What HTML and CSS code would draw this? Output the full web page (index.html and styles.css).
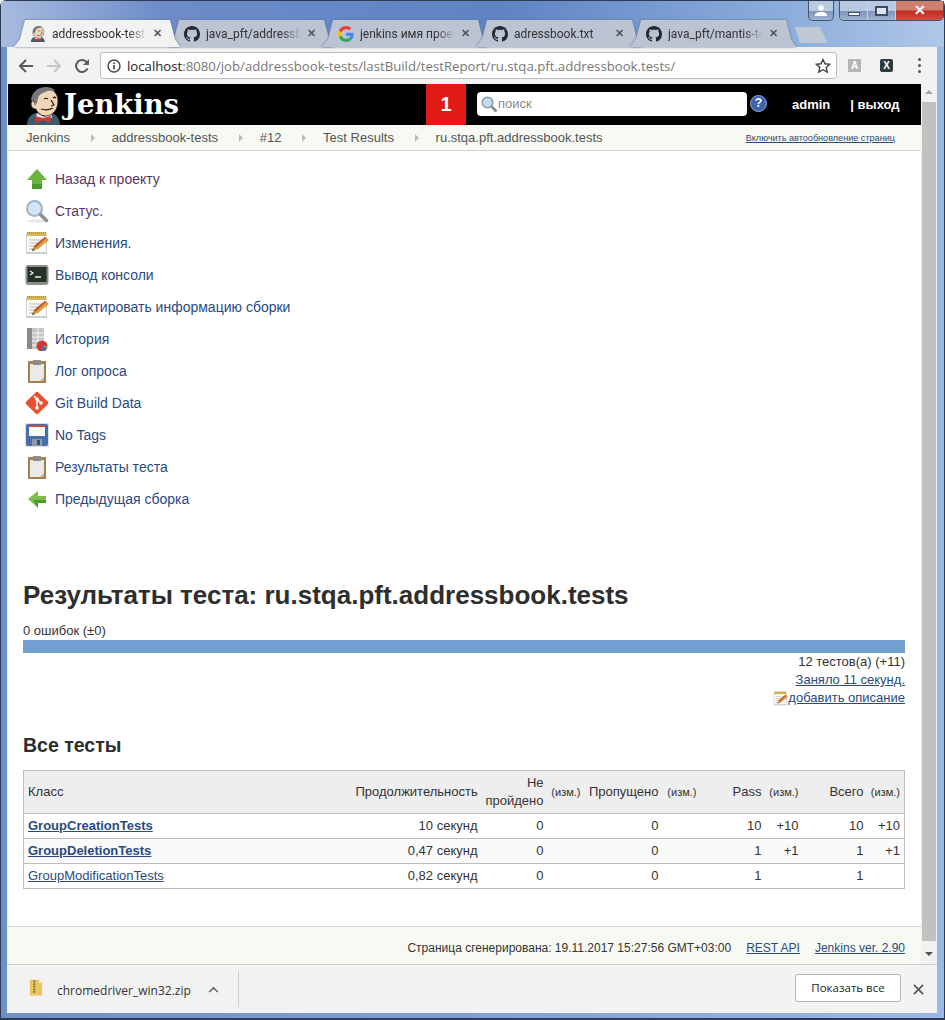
FILE: index.html
```html
<!DOCTYPE html>
<html>

<head>
  <title>addressbook-tests</title>
  <link rel="stylesheet" href="styles.css">
</head>

<body>
  <svg class="defs" width="0" height="0">
    <symbol id="gh" viewBox="0 0 16 16">
      <path fill="#24292e" d="M8 0C3.58 0 0 3.58 0 8c0 3.54 2.29 6.53 5.47 7.59.4.07.55-.17.55-.38 0-.19-.01-.82-.01-1.49-2.01.37-2.53-.49-2.69-.94-.09-.23-.48-.94-.82-1.13-.28-.15-.68-.52-.01-.53.63-.01 1.08.58 1.23.82.72 1.21 1.87.87 2.33.66.07-.52.28-.87.51-1.07-1.78-.2-3.64-.89-3.64-3.95 0-.87.31-1.59.82-2.15-.08-.2-.36-1.02.08-2.12 0 0 .67-.21 2.2.82.64-.18 1.32-.27 2-.27.68 0 1.36.09 2 .27 1.53-1.04 2.2-.82 2.2-.82.44 1.1.16 1.92.08 2.12.51.56.82 1.27.82 2.15 0 3.07-1.87 3.75-3.65 3.95.29.25.54.73.54 1.48 0 1.07-.01 1.93-.01 2.2 0 .21.15.46.55.38A8.013 8.013 0 0016 8c0-4.42-3.58-8-8-8z"/>
    </symbol>
    <symbol id="jenkins" viewBox="0 0 36 38">
      <path fill="#3f5a6c" d="M1 38c0-6 3-10 8-12l9 2 8-2c5 2 8 6 8 12z"/>
      <path fill="#f3f3f0" d="M11 26l7 4 7-4 1 5H10z"/>
      <path fill="#d33833" d="M9 29l8 2 8-2-1 7-7-3-7 3z"/>
      <path fill="#f0d6b7" stroke="#231f20" stroke-width="0.800" d="M8 14C8 6 14 2 21 2c7 0 11 5 11 12 0 8-5 15-12 15-6 0-9-4-10-7-3 0-5-2-5-5s3-5 5-3z"/>
      <path fill="#77767a" d="M5 13C6 5 12 0 20 0c4 0 7 1 9 4-6-1-13 1-16 5-1 2-2 5-2 8l-3-2c-1-1-2-1-3-2z"/>
      <path fill="none" stroke="#231f20" stroke-width="1.200" d="M18 12c1-1 3-1 4 0M27 11c1-1 2-1 3 0M25 13l3 5-3 1M15 22c3 1 8 1 12-1"/>
      <path fill="none" stroke="#231f20" stroke-width="0.800" d="M7 14c1 0 2 2 2 4"/>
    </symbol>
    <symbol id="note" viewBox="0 0 24 24">
      <path fill="#cfcfca" d="M1 3h21v20H1z"/>
      <path fill="#fbfbf8" d="M2 5h19v16H2z"/>
      <path fill="#d8b95a" d="M2 1h19v4H2z"/>
      <path stroke="#8a7a45" stroke-dasharray="1 1" d="M2 2h19"/>
      <path stroke="#b9b9b4" d="M4 9h13M4 12h10M4 15h7M4 18h5"/>
      <path fill="#e39a3c" d="M7 20l2-5L20 6l4 3-11 9z"/>
      <path fill="#b5542c" d="M9 15l11-9 1 1-11 10z"/>
      <path fill="#5d4a2e" d="M7 20l1-3 2 2z"/>
    </symbol>
    <symbol id="clip" viewBox="0 0 24 24">
      <path fill="#a5814f" d="M3 2h18v22H3z"/>
      <path fill="#e9ebe8" d="M5 5h14v17H5z"/>
      <path fill="#b3b4b0" d="M15 22l4-4v4z"/>
      <path fill="#8d8d8b" d="M8 1h8v5H8z"/>
    </symbol>
  </svg>

  <div class="window">
    <div class="tabstrip">
      <div class="tab active">
        <svg class="favicon"><use href="#jenkins"/></svg>
        <span class="tab-title">addressbook-tests</span>
        <span class="tab-x">✕</span>
      </div>
      <div class="tab">
        <svg class="favicon"><use href="#gh"/></svg>
        <span class="tab-title">java_pft/addressbook</span>
        <span class="tab-x">✕</span>
      </div>
      <div class="tab">
        <svg class="favicon" viewBox="0 0 48 48">
          <path fill="#ea4335" d="M24 9.500c3.500 0 6.700 1.200 9.200 3.600l6.900-6.900C35.900 2.400 30.500 0 24 0 14.600 0 6.500 5.400 2.600 13.200l8 6.200C12.500 13.700 17.800 9.500 24 9.500z"/>
          <path fill="#4285f4" d="M47 24.500c0-1.600-.1-3.100-.4-4.500H24v9h12.900c-.6 3-2.200 5.500-4.700 7.200l7.700 6C44.400 38.100 47 31.900 47 24.500z"/>
          <path fill="#fbbc05" d="M10.500 28.600C10 27.200 9.800 25.600 9.800 24s.3-3.200.8-4.600l-8-6.200C.9 16.500 0 20.100 0 24s.9 7.500 2.600 10.800z"/>
          <path fill="#34a853" d="M24 48c6.500 0 11.900-2.100 15.900-5.800l-7.700-6c-2.100 1.400-4.900 2.300-8.200 2.300-6.200 0-11.500-4.200-13.400-9.900l-8 6.200C6.500 42.600 14.600 48 24 48z"/>
        </svg>
        <span class="tab-title">jenkins имя проекта</span>
        <span class="tab-x">✕</span>
      </div>
      <div class="tab">
        <svg class="favicon"><use href="#gh"/></svg>
        <span class="tab-title no-fade">adressbook.txt</span>
        <span class="tab-x">✕</span>
      </div>
      <div class="tab">
        <svg class="favicon"><use href="#gh"/></svg>
        <span class="tab-title">java_pft/mantis-tests</span>
        <span class="tab-x">✕</span>
      </div>
      <div class="new-tab"></div>

      <div class="user-btn">
        <svg width="12" height="11" viewBox="0 0 12 11"><circle cx="6" cy="3" r="2.800" fill="#fff"/><path fill="#fff" d="M0 11c0-3 2-4 6-4s6 1 6 4z"/></svg>
      </div>
      <div class="win-btns">
        <div class="win-min"><span></span></div>
        <div class="win-max"><span></span></div>
        <div class="win-close">✕</div>
      </div>
    </div>

    <div class="chrome">
      <div class="toolbar">
        <svg class="nav" viewBox="0 0 16 16"><path fill="none" stroke="#5a5a5a" stroke-width="2" d="M15 8H2M8 2L2 8l6 6"/></svg>
        <svg class="nav" viewBox="0 0 16 16"><path fill="none" stroke="#c6c6c6" stroke-width="2" d="M1 8h13M8 2l6 6-6 6"/></svg>
        <svg class="nav" viewBox="0 0 16 16"><path fill="none" stroke="#5a5a5a" stroke-width="2" d="M13.500 10.500A6 6 0 1 1 13 4.500"/><path fill="#5a5a5a" d="M15 1v6H9z"/></svg>
        <div class="omnibox">
          <svg class="omni-info" viewBox="0 0 14 14"><circle cx="7" cy="7" r="6" fill="none" stroke="#444" stroke-width="1.400"/><path fill="#444" d="M6.200 6h1.600v4.500H6.200zM6.200 3.400h1.600V5H6.200z"/></svg>
          <span class="url"><b>localhost</b>:8080/job/addressbook-tests/lastBuild/testReport/ru.stqa.pft.addressbook.tests/</span>
          <svg class="omni-star" viewBox="0 0 16 16"><path fill="none" stroke="#444" stroke-width="1.400" d="M8 1.500l2 4.300 4.700.5-3.500 3.200 1 4.600L8 11.700l-4.200 2.400 1-4.600L1.300 6.300 6 5.800z"/></svg>
        </div>
        <div class="ext ext-a">A</div>
        <div class="ext ext-x">X</div>
        <div class="dots"><span></span><span></span><span></span></div>
      </div>

      <div class="viewport">
        <div class="page">
          <header class="jk-head">
            <svg class="jk-face"><use href="#jenkins"/></svg>
            <span class="jk-name">Jenkins</span>
            <div class="jk-badge">1</div>
            <div class="jk-search">
              <svg class="jk-lens" viewBox="0 0 24 24"><circle cx="10" cy="10" r="7" fill="#c5daef" stroke="#8a9aaa" stroke-width="2"/><path stroke="#8a8a8a" stroke-width="3.500" d="M15 15l7 7"/></svg>
              <span>поиск</span>
            </div>
            <div class="jk-help">?</div>
            <a class="jk-user">admin</a>
            <a class="jk-user jk-logout">| выход</a>
          </header>

          <nav class="crumbs">
            <span class="crumb">Jenkins</span>
            <span class="crumb">addressbook-tests</span>
            <span class="crumb">#12</span>
            <span class="crumb">Test Results</span>
            <span class="crumb last">ru.stqa.pft.addressbook.tests</span>
            <a class="autorefresh">Включить автообновление страниц</a>
          </nav>

          <div class="content">
            <ul class="side">
              <li>
                <svg class="ico" viewBox="0 0 24 24"><path fill="#6db33f" d="M12 2l10 11h-5v9H7v-9H2z"/><path fill="#4c9a2a" d="M7 17h10v5H7z"/></svg>
                <a class="visited">Назад к проекту</a>
              </li>
              <li>
                <svg class="ico" viewBox="0 0 24 24"><ellipse cx="12" cy="22" rx="10" ry="1.500" fill="#e4e4e4"/><circle cx="9.500" cy="9.500" r="7.500" fill="#d3e4f3" stroke="#9eb4c6" stroke-width="2"/><path stroke="#8f9296" stroke-width="3.500" stroke-linecap="round" d="M15.500 15.500l6 6"/></svg>
                <a class="visited">Статус.</a>
              </li>
              <li>
                <svg class="ico"><use href="#note"/></svg>
                <a>Изменения.</a>
              </li>
              <li>
                <svg class="ico" viewBox="0 0 24 24"><rect x="0.500" y="2" width="23" height="20" rx="3" fill="#8b8d89"/><rect x="2.500" y="4" width="19" height="15" fill="#263226"/><path fill="none" stroke="#eef" stroke-width="1.300" d="M5 8l3 2-3 2M10 14h6"/></svg>
                <a>Вывод консоли</a>
              </li>
              <li>
                <svg class="ico"><use href="#note"/></svg>
                <a>Редактировать информацию сборки</a>
              </li>
              <li>
                <svg class="ico" viewBox="0 0 24 24"><rect x="2" y="1" width="17" height="21" fill="#c4c6c4"/><path stroke="#f4f4f4" d="M2 6h17M2 10h17M2 14h17M2 18h17M13 1v21"/><rect x="2" y="1" width="5" height="21" fill="#8a8a88"/><circle cx="17" cy="19" r="5.500" fill="#cc3a32"/><path fill="#4b6ea8" d="M17 19l5 2a5.500 5.500 0 0 1-5 3.500z"/><path fill="#8ab04a" d="M17 19l5 2c.3-.6.5-1.300.5-2z"/></svg>
                <a>История</a>
              </li>
              <li>
                <svg class="ico"><use href="#clip"/></svg>
                <a>Лог опроса</a>
              </li>
              <li>
                <svg class="ico" viewBox="0 0 24 24"><rect x="3.500" y="3.500" width="17" height="17" rx="2" transform="rotate(45 12 12)" fill="#e8502f"/><path fill="none" stroke="#fff" stroke-width="1.500" d="M9 5l7 7M12 8v9"/><circle cx="12" cy="8" r="1.800" fill="#fff"/><circle cx="12" cy="17" r="1.800" fill="#fff"/><circle cx="16" cy="12" r="1.800" fill="#fff"/></svg>
                <a>Git Build Data</a>
              </li>
              <li>
                <svg class="ico" viewBox="0 0 24 24"><rect width="24" height="24" fill="#d9dde6"/><rect x="1" y="1" width="22" height="22" rx="2" fill="#4a6ca8"/><rect x="4" y="2" width="16" height="11" fill="#fafafa"/><rect x="4" y="2" width="16" height="2" fill="#d5463a"/><rect x="7" y="16" width="10" height="7" fill="#8d99ad"/><rect x="12" y="17" width="3" height="5" fill="#3d4c68"/></svg>
                <a>No Tags</a>
              </li>
              <li>
                <svg class="ico"><use href="#clip"/></svg>
                <a>Результаты теста</a>
              </li>
              <li>
                <svg class="ico" viewBox="0 0 24 24"><path fill="#7dbb4b" d="M3 12l10-8v5h8v7h-8v5z"/><path fill="#4c9a2a" d="M13 16h8v-3H8l5 8z"/></svg>
                <a>Предыдущая сборка</a>
              </li>
            </ul>

            <main class="report">
              <h1>Результаты теста: ru.stqa.pft.addressbook.tests</h1>
              <div class="errors">0 ошибок (±0)</div>
              <div class="bar"></div>
              <div class="summary">
                <div>12 тестов(а) (+11)</div>
                <div><a>Заняло 11 секунд.</a></div>
                <div class="add-desc">
                  <svg class="ico-small"><use href="#note"/></svg><a>добавить описание</a>
                </div>
              </div>

              <h2>Все тесты</h2>
              <table class="results">
                <colgroup>
                  <col>
                  <col class="c-dur">
                  <col class="c-fail">
                  <col class="c-diff">
                  <col class="c-skip">
                  <col class="c-diff2">
                  <col class="c-pass">
                  <col class="c-diff">
                  <col class="c-pass">
                  <col class="c-diff">
                </colgroup>
                <thead>
                  <tr>
                    <th class="left">Класс</th>
                    <th>Продолжительность</th>
                    <th>Не пройдено</th>
                    <th class="small">(изм.)</th>
                    <th>Пропущено</th>
                    <th class="small">(изм.)</th>
                    <th>Pass</th>
                    <th class="small">(изм.)</th>
                    <th>Всего</th>
                    <th class="small">(изм.)</th>
                  </tr>
                </thead>
                <tbody>
                  <tr>
                    <td class="left"><a class="strong">GroupCreationTests</a></td>
                    <td>10 секунд</td>
                    <td>0</td>
                    <td></td>
                    <td>0</td>
                    <td></td>
                    <td>10</td>
                    <td>+10</td>
                    <td>10</td>
                    <td>+10</td>
                  </tr>
                  <tr class="alt">
                    <td class="left"><a class="strong">GroupDeletionTests</a></td>
                    <td>0,47 секунд</td>
                    <td>0</td>
                    <td></td>
                    <td>0</td>
                    <td></td>
                    <td>1</td>
                    <td>+1</td>
                    <td>1</td>
                    <td>+1</td>
                  </tr>
                  <tr>
                    <td class="left"><a>GroupModificationTests</a></td>
                    <td>0,82 секунд</td>
                    <td>0</td>
                    <td></td>
                    <td>0</td>
                    <td></td>
                    <td>1</td>
                    <td></td>
                    <td>1</td>
                    <td></td>
                  </tr>
                </tbody>
              </table>
            </main>
          </div>

          <footer class="foot">
            <span>Страница сгенерирована: 19.11.2017 15:27:56 GMT+03:00</span>
            <a>REST API</a>
            <a>Jenkins ver. 2.90</a>
          </footer>
        </div>

        <div class="scrollbar">
          <div class="sb-up"></div>
          <div class="sb-thumb"></div>
          <div class="sb-down"></div>
        </div>
      </div>

      <div class="downloads">
        <svg class="zip" viewBox="0 0 16 18"><path fill="#e9c65f" d="M1 0h10l4 4v14H1z"/><path fill="#f6e7a8" d="M11 0l4 4h-4z"/><path stroke="#7a6a3a" stroke-width="2" stroke-dasharray="2 1" d="M6 1v14"/></svg>
        <span class="dl-name">chromedriver_win32.zip</span>
        <svg class="caret" viewBox="0 0 12 8"><path fill="none" stroke="#555" stroke-width="1.600" d="M1 7l5-5 5 5"/></svg>
        <div class="dl-sep"></div>
        <div class="dl-all">Показать все</div>
        <svg class="dl-x" viewBox="0 0 12 12"><path stroke="#555" stroke-width="1.800" d="M1 1l10 10M11 1L1 11"/></svg>
      </div>
    </div>
  </div>
</body>

</html>
```

FILE: styles.css
```css
html,
body {
  margin: 0;
  padding: 0;
}

body {
  font-family: "Liberation Sans", sans-serif;
  font-size: 13px;
  color: #333;
  overflow: hidden;
}

.defs {
  display: block;
  height: 0;
}

a {
  color: #2a4a7f;
  text-decoration: underline;
}

.window {
  width: 945px;
  height: 1020px;
  box-sizing: border-box;
  display: flex;
  flex-direction: column;
  padding-bottom: 5px;
  border: 1px solid #2c3a52;
  border-bottom-width: 2px;
  border-radius: 6px 6px 0 0;
  background: linear-gradient(90deg, #6f8fc9, #7e9fd8 50%, #9db8e6);
}

/* tabs */
.tabstrip {
  height: 46px;
  display: flex;
  align-items: flex-end;
  padding: 0 3px 0 13px;
  flex: none;
  background: linear-gradient(90deg, #a7bbdf 0, #6d8cc8 160px, #5f83c4 500px, #8fb0dc 800px, #b0c8e8 945px);
}

.tab {
  position: relative;
  width: 166px;
  height: 27px;
  margin-right: -12px;
  box-sizing: border-box;
  padding-left: 16px;
  display: flex;
  flex: none;
  align-items: center;
  font-family: Roboto, sans-serif;
  font-size: 12px;
  color: #333;
  isolation: isolate;
  filter: drop-shadow(0 0 1px #5f6f8f);
}

.tab::before {
  content: '';
  position: absolute;
  inset: 0;
  z-index: -1;
  background: #bcc3d3;
  clip-path: polygon(0 100%, 6px 70%, 11px 0, 156px 0, 161px 70%, 100% 100%);
}

.tab.active {
  z-index: 2;
}

.tab.active::before {
  background: #f2f2f2;
}

.favicon {
  width: 16px;
  height: 16px;
  flex: none;
}

.tab-title {
  width: 95px;
  margin-left: 6px;
  overflow: hidden;
  white-space: nowrap;
  -webkit-mask-image: linear-gradient(90deg, #000 80%, transparent);
  mask-image: linear-gradient(90deg, #000 80%, transparent);
}

.tab-title.no-fade {
  -webkit-mask-image: none;
  mask-image: none;
}

.tab-x {
  margin-left: 6px;
  font-size: 11px;
  font-weight: bold;
  color: #555;
}

.new-tab {
  width: 33px;
  height: 16px;
  margin: 0 -20px 4px 11px;
  flex: none;
  background: #bfc9d6;
  clip-path: polygon(0 0, 75% 0, 100% 100%, 15% 100%);
}

.user-btn {
  align-self: flex-start;
  margin-left: auto;
  width: 24px;
  height: 19px;
  flex: none;
  display: flex;
  align-items: center;
  justify-content: center;
  border: 1px solid #44526e;
  border-top: none;
  border-radius: 0 0 5px 5px;
  background: linear-gradient(#b9c9e0 50%, #7f95bb 55%, #9fb3d2);
}

.win-btns {
  align-self: flex-start;
  margin-left: 5px;
  height: 19px;
  flex: none;
  display: flex;
  border: 1px solid #44526e;
  border-top: none;
  border-radius: 0 0 5px 5px;
  overflow: hidden;
}

.win-min,
.win-max {
  width: 27px;
  display: flex;
  align-items: center;
  justify-content: center;
  background: linear-gradient(#b9c9e0 50%, #7f95bb 55%, #9fb3d2);
  border-right: 1px solid #c5d2e6;
}

.win-min span {
  width: 12px;
  height: 4px;
  margin-top: 7px;
  background: #fff;
  border: 1px solid #44526e;
  box-sizing: border-box;
}

.win-max span {
  width: 13px;
  height: 10px;
  border: 2px solid #3d4c68;
  box-sizing: border-box;
  background: #dfe6f0;
}

.win-close {
  width: 47px;
  text-align: center;
  font-size: 14px;
  font-weight: bold;
  line-height: 19px;
  color: #fff;
  background: linear-gradient(#cf7d6e 45%, #bd2f22 55%, #cf4f3f);
}

/* chrome frame */
.chrome {
  flex: 1;
  min-height: 0;
  margin: 0 7px 0 6px;
  display: flex;
  flex-direction: column;
  background: #f2f2f2;
}

.toolbar {
  height: 37px;
  flex: none;
  display: flex;
  align-items: center;
  padding-left: 11px;
}

.nav {
  width: 16px;
  height: 16px;
  margin-right: 12px;
  flex: none;
}

.omnibox {
  width: 737px;
  height: 27px;
  margin-left: -2px;
  box-sizing: border-box;
  border: 1px solid #bdbdbd;
  border-radius: 3px;
  background: #fff;
  display: flex;
  align-items: center;
  padding: 0 5px 0 6px;
  flex: none;
}

.omni-info {
  width: 14px;
  height: 14px;
  flex: none;
}

.url {
  margin-left: 6px;
  font-family: "Open Sans", sans-serif;
  font-size: 13.200px;
  color: #777;
  white-space: nowrap;
}

.url b {
  font-weight: normal;
  color: #222;
}

.omni-star {
  width: 16px;
  height: 16px;
  margin-left: auto;
  flex: none;
}

.ext {
  width: 13px;
  height: 13px;
  font-size: 10px;
  font-weight: bold;
  line-height: 13px;
  text-align: center;
  color: #fff;
  flex: none;
}

.ext-a {
  margin-left: 11px;
  background: #b5b5b5;
}

.ext-x {
  margin-left: 19px;
  background: #2f3a40;
  border-radius: 2px;
}

.dots {
  margin-left: 25px;
  display: flex;
  flex-direction: column;
  gap: 3px;
}

.dots span {
  width: 3px;
  height: 3px;
  border-radius: 50%;
  background: #555;
}

.viewport {
  flex: 1;
  min-height: 0;
  display: flex;
}

.page {
  flex: 1;
  min-width: 0;
  margin-left: 1px;
  display: flex;
  flex-direction: column;
  background: #fff;
}

/* jenkins header */
.jk-head {
  height: 41px;
  flex: none;
  background: #000;
  display: flex;
  align-items: center;
  color: #fff;
}

.jk-face {
  width: 36px;
  height: 38px;
  margin-left: 18px;
  flex: none;
  align-self: flex-end;
}

.jk-name {
  width: 362px;
  margin: -2px 0 0 2px;
  font-family: "DejaVu Serif", serif;
  font-size: 27.400px;
  font-weight: bold;
}

.jk-badge {
  width: 40px;
  align-self: stretch;
  background: #e01b16;
  font-size: 20px;
  font-weight: bold;
  line-height: 41px;
  text-align: center;
}

.jk-search {
  width: 270px;
  height: 24px;
  margin: -2px 0 0 11px;
  padding-left: 3px;
  box-sizing: border-box;
  background: #fff;
  border-radius: 4px;
  display: flex;
  align-items: center;
  color: #888;
  font-size: 13px;
}

.jk-lens {
  width: 18px;
  height: 18px;
  flex: none;
}

.jk-help {
  width: 15px;
  height: 15px;
  margin: -2px 0 0 3px;
  border: 1px solid #8fa9d6;
  border-radius: 50%;
  background: #3a65ae;
  font-size: 12px;
  font-weight: bold;
  line-height: 15px;
  text-align: center;
}

.jk-user {
  margin-left: 25px;
  color: #fff;
  font-weight: bold;
  text-decoration: none;
}

.jk-logout {
  margin-left: 20px;
}

/* breadcrumbs */
.crumbs {
  height: 26px;
  flex: none;
  box-sizing: border-box;
  padding-left: 18px;
  display: flex;
  align-items: center;
  background: #f6faf2;
  border-bottom: 1px solid #d3d7cf;
  color: #555;
  font-size: 13px;
}

.crumb {
  position: relative;
  margin-right: 41.700px;
  white-space: nowrap;
}

.crumb::after {
  content: '';
  position: absolute;
  right: -25px;
  top: 4px;
  border-left: 4px solid #bbb;
  border-top: 4px solid transparent;
  border-bottom: 4px solid transparent;
}

.crumb.last::after {
  display: none;
}

.autorefresh {
  margin-left: auto;
  margin-right: 26px;
  font-size: 9.100px;
}

/* main area */
.content {
  flex: 1;
  min-height: 0;
  padding: 12px 16px 0 15px;
}

.side {
  list-style: none;
  margin: 0;
  padding: 0;
  height: 415px;
}

.side li {
  height: 32px;
  display: flex;
  align-items: center;
  font-size: 14px;
}

.side a {
  text-decoration: none;
}

.side a.visited {
  color: #5c3566;
}

.ico {
  width: 24px;
  height: 24px;
  margin: 0 6px 0 2px;
  flex: none;
}

.report h1 {
  margin: 0;
  font-size: 26px;
  line-height: 34px;
  color: #2e2e2e;
}

.errors {
  margin-top: 11px;
  font-size: 13px;
  line-height: 15px;
}

.bar {
  height: 13px;
  margin-top: 2px;
  background: #729fcf;
}

.summary {
  text-align: right;
  line-height: 18px;
  margin-top: 0;
}

.add-desc {
  display: flex;
  justify-content: flex-end;
  align-items: center;
}

.ico-small {
  width: 15px;
  height: 15px;
}

.report h2 {
  margin: 26px 0 13px;
  font-size: 19.500px;
  line-height: 24px;
  color: #2e2e2e;
}

.results {
  width: 100%;
  table-layout: fixed;
  border-collapse: collapse;
  border: 1px solid #bbb;
  font-size: 13px;
}

.c-dur {
  width: 130px;
}

.c-fail {
  width: 66px;
}

.c-diff {
  width: 37px;
}

.c-diff2 {
  width: 38px;
}

.c-skip {
  width: 78px;
}

.c-pass {
  width: 65px;
}

.results th {
  height: 43px;
  box-sizing: border-box;
  padding: 0 4px;
  background: #eee;
  font-weight: normal;
  text-align: right;
  line-height: 18px;
  color: #333;
}

.results th.small {
  font-size: 11px;
  white-space: nowrap;
  padding: 0 4px 0 0;
}

.results td {
  height: 25px;
  box-sizing: border-box;
  padding: 0 4px 2px;
  text-align: right;
  border-top: 1px solid #bbb;
}

.results .left {
  text-align: left;
}

.results .alt td {
  background: #fafafa;
}

.strong {
  font-weight: bold;
}

/* footer */
.foot {
  height: 38px;
  flex: none;
  box-sizing: border-box;
  background: #f6faf2;
  border-top: 1px solid #d3d7cf;
  display: flex;
  align-items: center;
  justify-content: flex-end;
  gap: 15px;
  padding: 4px 16px 0 0;
  font-size: 12px;
}

/* scrollbar */
.scrollbar {
  width: 16px;
  flex: none;
  display: flex;
  flex-direction: column;
  background: #f1f1f1;
}

.sb-up,
.sb-down {
  height: 18px;
  flex: none;
  position: relative;
}

.sb-up::after,
.sb-down::after {
  content: '';
  position: absolute;
  left: 4px;
  top: 6px;
  border-left: 4px solid transparent;
  border-right: 4px solid transparent;
}

.sb-up::after {
  border-bottom: 4px solid #a3a3a3;
}

.sb-down::after {
  border-top: 4px solid #505050;
}

.sb-thumb {
  flex: 1;
  margin: 0 1px 5px;
  background: #c1c1c1;
}

/* downloads */
.downloads {
  height: 49px;
  flex: none;
  border-top: 1px solid #d0d0d0;
  box-sizing: border-box;
  display: flex;
  align-items: center;
  padding-left: 22px;
  background: #f2f2f2;
  font-family: "Open Sans", sans-serif;
  font-size: 12px;
}

.zip {
  width: 14px;
  height: 17px;
  flex: none;
  margin-top: -4px;
}

.dl-name {
  margin: 3px 0 0 14px;
  color: #333;
}

.caret {
  width: 11px;
  height: 7px;
  margin-left: 17px;
  flex: none;
}

.dl-sep {
  width: 1px;
  height: 36px;
  margin-left: 19px;
  background: #ccc;
}

.dl-all {
  margin: -3px 0 0 auto;
  width: 106px;
  height: 28px;
  box-sizing: border-box;
  border: 1px solid #b5b5b5;
  border-radius: 3px;
  background: #fff;
  line-height: 26px;
  text-align: center;
  font-size: 11.500px;
  color: #222;
}

.dl-x {
  width: 11px;
  height: 11px;
  margin: 0 13px 0 12px;
  flex: none;
}
```
